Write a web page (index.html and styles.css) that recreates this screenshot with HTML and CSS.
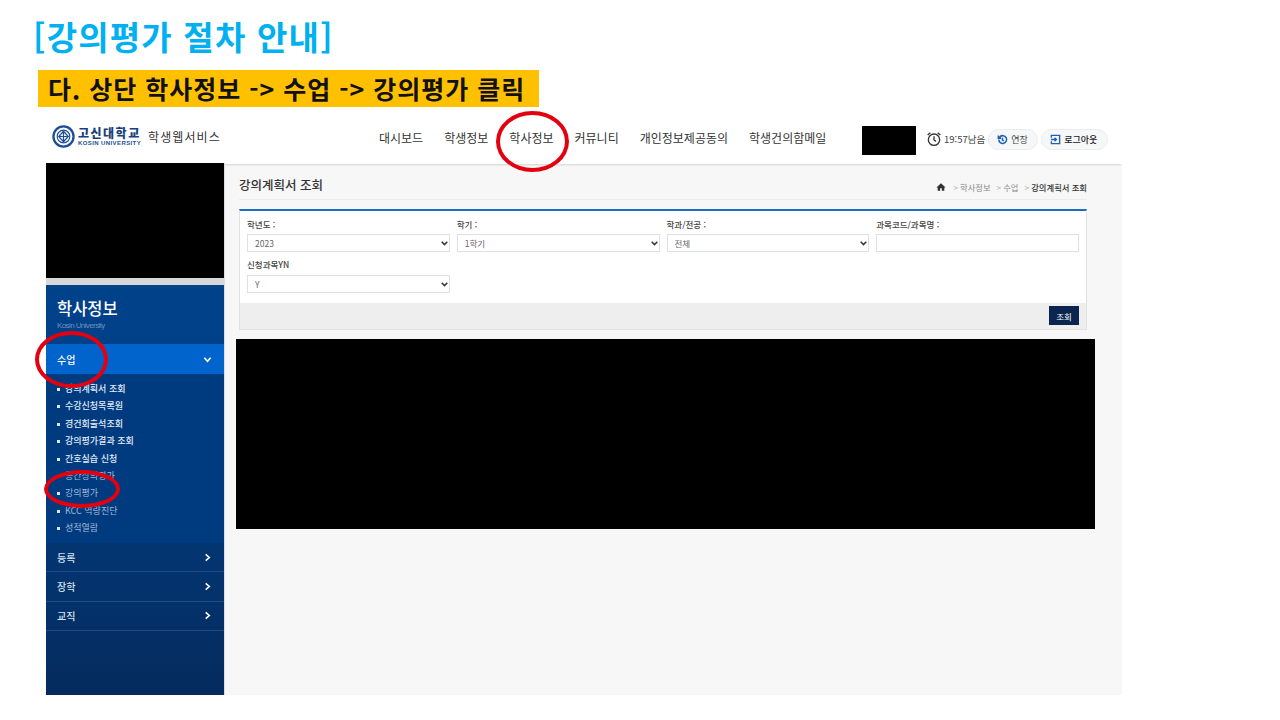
FILE: index.html
```html
<!DOCTYPE html>
<html lang="ko">
<head>
    <meta charset="UTF-8">
    <meta name="viewport" content="width=device-width, initial-scale=1.0">
    <title>강의평가 절차 안내</title>
    <link rel="stylesheet" href="styles.css">
</head>
<body>
    <h1 class="slide-title">[강의평가 절차 안내]</h1>
    <p class="step">다. 상단 학사정보 -&gt; 수업 -&gt; 강의평가 클릭</p>

    <div class="shot">
        <header class="top">
            <div class="logo">
                <svg class="seal" width="23" height="23" viewBox="0 0 24 24" fill="none" stroke="#1d4f91">
                    <circle cx="12" cy="12" r="10.5" stroke-width="2.4"/>
                    <circle cx="12" cy="12" r="6.6" stroke-width="1.2"/>
                    <path d="M12 6.5 17 12 12 17.5 7 12Z M12 7v10 M8 12h8" stroke-width="1.3"/>
                </svg>
                <div class="logo-name">
                    <b>고신대학교</b>
                    <small>KOSIN UNIVERSITY</small>
                </div>
                <span class="logo-sub">학생웹서비스</span>
            </div>
            <nav class="gnb">
                <a>대시보드</a>
                <a>학생정보</a>
                <a>학사정보</a>
                <a>커뮤니티</a>
                <a>개인정보제공동의</a>
                <a>학생건의함메일</a>
            </nav>
            <div class="hide-user"></div>
            <div class="session">
                <svg width="16" height="16" viewBox="0 0 24 24" fill="none" stroke="#333" stroke-width="2">
                    <circle cx="12" cy="13" r="8.5"/>
                    <path d="M12 8v5.5l3 2 M2.5 6 6.5 2.5 M21.5 6l-4-3.5"/>
                </svg>
                <span class="time">19:57남음</span>
                <button class="pill pill-ext">
                    <svg width="11" height="11" viewBox="0 0 24 24" fill="none" stroke="#1f5fb4" stroke-width="3.4">
                        <path d="M4 12a8.5 8.5 0 1 0 2.5-6L3 9 M3 3v6h6 M12 8v5l3 2"/>
                    </svg>
                    연장
                </button>
                <button class="pill pill-out">
                    <svg width="11" height="11" viewBox="0 0 24 24" fill="none" stroke="#1f5fb4" stroke-width="3">
                        <path d="M3 8V3h18v18H3v-5 M2 12h12 M10 8l4 4-4 4"/>
                    </svg>
                    로그아웃
                </button>
            </div>
        </header>

        <div class="main">
            <aside class="side">
                <div class="hide-photo"></div>
                <div class="side-gap"></div>
                <div class="side-head">
                    <h2>학사정보</h2>
                    <p>Kosin University</p>
                </div>
                <div class="menu menu-on">
                    <span>수업</span>
                    <svg width="9" height="9" viewBox="0 0 10 10" fill="none" stroke="#fff" stroke-width="1.8"><path d="M1.5 3 5 7 8.5 3"/></svg>
                </div>
                <ul class="sub">
                    <li>강의계획서 조회</li>
                    <li>수강신청목록원</li>
                    <li>경건회출석조회</li>
                    <li>강의평가결과 조회</li>
                    <li>간호실습 신청</li>
                    <li class="dim">공간상의평가</li>
                    <li class="dim">강의평가</li>
                    <li class="dim">KCC 역량진단</li>
                    <li class="dim">성적열람</li>
                </ul>
                <div class="menu">
                    <span>등록</span>
                    <svg width="9" height="9" viewBox="0 0 10 10" fill="none" stroke="#fff" stroke-width="1.8"><path d="M3 1.5 7 5 3 8.5"/></svg>
                </div>
                <div class="menu">
                    <span>장학</span>
                    <svg width="9" height="9" viewBox="0 0 10 10" fill="none" stroke="#fff" stroke-width="1.8"><path d="M3 1.5 7 5 3 8.5"/></svg>
                </div>
                <div class="menu">
                    <span>교직</span>
                    <svg width="9" height="9" viewBox="0 0 10 10" fill="none" stroke="#fff" stroke-width="1.8"><path d="M3 1.5 7 5 3 8.5"/></svg>
                </div>
            </aside>

            <section class="content">
                <div class="page-head">
                    <h3>강의계획서 조회</h3>
                    <div class="crumb">
                        <svg width="10" height="10" viewBox="0 0 24 24" fill="#333"><path d="M12 3 1 13h3v8h6v-6h4v6h6v-8h3z"/></svg>
                        <span>학사정보</span>
                        <span>수업</span>
                        <span class="crumb-now">강의계획서 조회</span>
                    </div>
                </div>

                <div class="panel">
                    <div class="fields">
                        <label class="field">학년도 :
                            <select><option>2023</option></select>
                        </label>
                        <label class="field">학기 :
                            <select><option>1학기</option></select>
                        </label>
                        <label class="field">학과/전공 :
                            <select><option>전체</option></select>
                        </label>
                        <label class="field">과목코드/과목명 :
                            <input type="text">
                        </label>
                        <label class="field">신청과목YN
                            <select><option>Y</option></select>
                        </label>
                    </div>
                    <div class="panel-foot">
                        <button class="search">조회</button>
                    </div>
                </div>

                <div class="hide-result"></div>
            </section>
        </div>
    </div>

    <!-- 빨간 표시 -->
    <div class="mark mark-gnb"></div>
    <div class="mark mark-menu"></div>
    <div class="mark mark-sub"></div>
</body>
</html>
```

FILE: styles.css
```css
* {
    box-sizing: border-box;
}
body {
    margin: 0;
    width: 1280px;
    height: 720px;
    overflow: hidden;
    position: relative;
    background: #fff;
    font-family: "Noto Sans CJK KR", "Noto Sans", sans-serif;
    color: #333;
}
.slide-title {
    margin: 0;
    height: 70px;
    padding: 12px 0 0 33px;
    font-size: 33px;
    line-height: 48px;
    font-weight: 700;
    letter-spacing: 1.2px;
    color: #00b0f0;
}
.step {
    margin: 0 0 0 38px;
    width: 501px;
    height: 37px;
    padding-left: 10px;
    background: #ffc000;
    font-size: 25px;
    line-height: 37px;
    font-weight: 700;
    letter-spacing: 1px;
    white-space: nowrap;
    color: #111;
}
.shot {
    margin: 8px 0 0 46px;
    width: 1076px;
    height: 580px;
    display: flex;
    flex-direction: column;
}

/* header */
.top {
    height: 49px;
    display: flex;
    align-items: center;
    position: relative;
    z-index: 1;
    background: #fff;
    box-shadow: 0 2px 2px -1px rgba(0, 0, 0, 0.15);
}
.logo {
    width: 312px;
    padding: 0 0 7px 6px;
    display: flex;
    align-items: center;
}
.seal {
    margin-right: 3px;
}
.logo-name {
    display: flex;
    flex-direction: column;
    width: 64px;
    color: #1d4f91;
}
.logo-name b {
    font-size: 12px;
    line-height: 14px;
    letter-spacing: 1.5px;
    font-weight: 900;
    white-space: nowrap;
    color: #17407d;
}
.logo-name small {
    font-family: "Liberation Sans", sans-serif;
    font-size: 6px;
    line-height: 7px;
    font-weight: 700;
    letter-spacing: 0.4px;
    white-space: nowrap;
}
.logo-sub {
    margin-left: 6px;
    font-size: 12px;
    letter-spacing: 1.1px;
    color: #333;
    white-space: nowrap;
}
.gnb {
    width: 504px;
    padding: 0 0 4px 21px;
    display: flex;
    font-size: 12px;
    white-space: nowrap;
}
.gnb a {
    margin-right: 21px;
}
.hide-user {
    width: 54px;
    height: 29px;
    margin-top: 2px;
    background: #000;
}
.session {
    margin-left: 10px;
    padding-bottom: 1px;
    display: flex;
    align-items: center;
    font-size: 9.5px;
    white-space: nowrap;
}
.time {
    margin: 0 3px 0 2px;
    color: #444;
}
.pill {
    height: 21px;
    padding: 0 8px;
    margin-right: 3px;
    display: flex;
    align-items: center;
    gap: 3px;
    border: 1px solid #ececec;
    border-radius: 11px;
    background: #f6f7f9;
    font-family: inherit;
    font-size: 9px;
    color: #444;
}
.pill-ext {
    width: 50px;
}
.pill-out {
    width: 67px;
    color: #222;
    font-weight: 500;
}

/* layout */
.main {
    flex: 1;
    display: flex;
    min-height: 0;
    background: #f7f7f7;
}
.side {
    width: 179px;
    margin-top: -1px;
    position: relative;
    z-index: 2;
    display: flex;
    flex-direction: column;
    background: linear-gradient(#00458f 0, #003e84 50%, #03346f 75%, #052b5e 100%);
    border-right: 1px solid #d9dde2;
}
.hide-photo {
    height: 115px;
    background: #000;
}
.side-gap {
    height: 7px;
    background: #d8d8d8;
}
.side-head {
    height: 59px;
    padding: 12px 0 0 11px;
    color: #fff;
}
.side-head h2 {
    margin: 0;
    font-size: 16.5px;
    line-height: 22px;
    font-weight: 500;
}
.side-head p {
    margin: 1px 0 0;
    font-family: "Liberation Sans", sans-serif;
    font-size: 8px;
    line-height: 11px;
    letter-spacing: -0.6px;
    color: #6d8fc0;
}
.menu {
    height: 29.3px;
    padding: 0 12px 0 11px;
    display: flex;
    align-items: center;
    justify-content: space-between;
    border-bottom: 1px solid #1c4a85;
    font-size: 10px;
    font-weight: 500;
    color: #d9e2ef;
}
.menu-on {
    height: 30px;
    border-bottom: 0;
    background: #0064cc;
    color: #fff;
}
.sub {
    margin: 0;
    padding: 6px 0 0 11px;
    height: 169px;
    list-style: none;
    background: #003b80;
}
.sub li {
    position: relative;
    padding-left: 8px;
    height: 17.4px;
    font-size: 9px;
    line-height: 17.4px;
    font-weight: 500;
    color: #e4ebf5;
}
.sub li::before {
    content: "";
    position: absolute;
    left: 0;
    top: 8px;
    width: 3px;
    height: 3px;
    background: #dfe8f5;
}
.sub .dim {
    color: #a3b8d6;
    font-weight: 400;
}

/* content */
.content {
    flex: 1;
    min-width: 0;
    padding: 0 35px 0 14px;
}
.page-head {
    height: 36px;
    margin-bottom: 9px;
    padding-top: 11px;
    display: flex;
    justify-content: space-between;
    border-bottom: 1px solid #ececec;
}
.page-head h3 {
    margin: 0;
    font-size: 12.5px;
    line-height: 20px;
    font-weight: 500;
    color: #333;
}
.crumb {
    padding-top: 5px;
    display: flex;
    align-items: flex-start;
    font-size: 8.3px;
    line-height: 14px;
    color: #888;
}
.crumb svg {
    margin: 2px 1px 0 0;
}
.crumb span {
    margin-left: 4px;
}
.crumb span::before {
    content: ">";
    margin: 0 2px;
    color: #bbb;
}
.crumb-now {
    color: #333;
    font-weight: 500;
}
.panel {
    height: 121px;
    display: flex;
    flex-direction: column;
    background: #fff;
    border: 1px solid #e2e2e2;
    border-top: 2px solid #1b6ec2;
}
.fields {
    flex: 1;
    padding: 4px 7px 0;
    display: grid;
    grid-template-columns: repeat(4, 1fr);
    column-gap: 7px;
    row-gap: 3px;
    align-content: start;
}
.field {
    display: flex;
    flex-direction: column;
    font-size: 8.5px;
    line-height: 18px;
    font-weight: 500;
    color: #444;
}
.field select,
.field input {
    width: 100%;
    height: 18px;
    margin: 1px 0 0;
    padding: 0 0 0 7px;
    border: 1px solid #e0e0e0;
    border-radius: 0;
    background: #fff;
    font-family: inherit;
    font-size: 8.5px;
    color: #666;
}
.field:last-child select {
    margin-top: 2px;
}
.field select {
    appearance: none;
    background: #fff url("data:image/svg+xml,%3Csvg xmlns='http://www.w3.org/2000/svg' width='7' height='5' viewBox='0 0 7 5'%3E%3Cpath d='M.7.8 3.5 3.6 6.3.8' fill='none' stroke='%23333' stroke-width='1.5'/%3E%3C/svg%3E") no-repeat right 1px center;
}
.panel-foot {
    height: 26px;
    padding: 3px 7px 0 0;
    display: flex;
    justify-content: flex-end;
    align-items: flex-start;
    background: #eee;
}
.search {
    width: 30px;
    height: 19px;
    padding: 0;
    border: 0;
    background: #0b2550;
    font-family: inherit;
    font-size: 8.5px;
    color: #fff;
}
.hide-result {
    width: 859px;
    height: 190px;
    margin: 9px 0 0 -3px;
    background: #000;
}

/* 빨간 표시 */
.mark {
    position: absolute;
    z-index: 3;
    border: 4px solid #e3000f;
    border-radius: 50%;
}
.mark-gnb {
    left: 496px;
    top: 111px;
    width: 73px;
    height: 61px;
}
.mark-menu {
    left: 35px;
    top: 331px;
    width: 73px;
    height: 57px;
}
.mark-sub {
    left: 44px;
    top: 470px;
    width: 76px;
    height: 38px;
}
```
